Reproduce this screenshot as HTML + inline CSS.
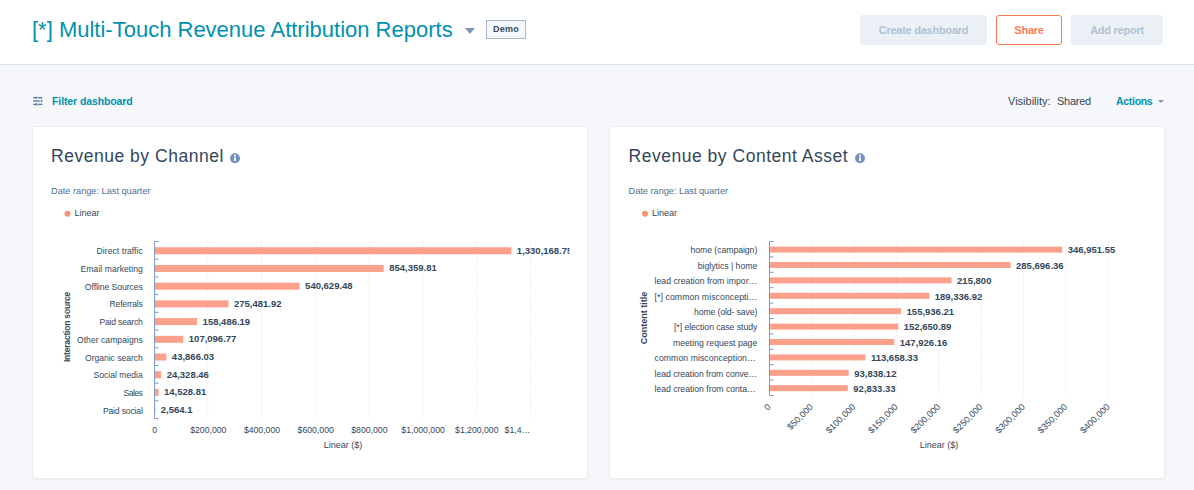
<!DOCTYPE html>
<html><head><meta charset="utf-8">
<style>
*{margin:0;padding:0;box-sizing:border-box}
html,body{width:1194px;height:490px;overflow:hidden;background:#f5f7fa;font-family:"Liberation Sans",sans-serif;color:#33475b}
.abs{position:absolute;white-space:nowrap}
#hdr{position:absolute;left:0;top:0;width:1194px;height:65px;background:#fff;border-bottom:1px solid #dfe3eb}
#title{left:32px;top:16px;font-size:22px;color:#0091ae;line-height:28px}
#caret{left:465px;top:28px;width:0;height:0;border-left:5.75px solid transparent;border-right:5.75px solid transparent;border-top:6.3px solid #7c98b6}
#demo{left:486px;top:20px;width:40px;height:19px;border:1px solid #a9b8cc;background:#f5f8fa;font-size:9px;letter-spacing:0.2px;font-weight:bold;line-height:17px;text-align:center;color:#33475b}
.btn{position:absolute;top:15px;height:30px;border-radius:3px;font-size:11px;letter-spacing:-0.25px;font-weight:bold;line-height:30px;text-align:center;white-space:nowrap}
#b1{left:860px;width:127px;background:#eaf0f6;color:#b0c1d4}
#b2{left:996px;width:66px;background:#fff;border:1px solid #ff7a59;color:#ff7a59;line-height:28px}
#b3{left:1071px;width:92px;background:#eaf0f6;color:#b0c1d4}
#filt{left:52px;top:94px;font-size:10.5px;letter-spacing:-0.1px;font-weight:bold;color:#0091ae;line-height:14px}
#vis1{left:1008px;top:94px;font-size:11px;color:#33475b;line-height:14px}
#vis2{left:1057px;top:94px;font-size:11px;letter-spacing:-0.25px;color:#33475b;line-height:14px}
#act{left:1116px;top:94px;font-size:10.5px;letter-spacing:-0.3px;font-weight:bold;color:#0091ae;line-height:14px}
#actc{left:1157.5px;top:100px;width:0;height:0;border-left:3px solid transparent;border-right:3px solid transparent;border-top:3.5px solid #7c98b6}
.card{position:absolute;top:126px;width:556px;height:353px;background:#fff;border:1px solid #e8ebf0;border-radius:3px;box-shadow:0 1px 2px rgba(45,62,80,0.04)}
#c1{left:32px}
#c2{left:609px}
svg text{font-family:"Liberation Sans",sans-serif}
</style></head><body>
<div id="hdr">
  <div id="title" class="abs">[*] Multi-Touch Revenue Attribution Reports</div>
  <div id="caret" class="abs"></div>
  <div id="demo" class="abs">Demo</div>
  <div id="b1" class="btn">Create dashboard</div>
  <div id="b2" class="btn">Share</div>
  <div id="b3" class="btn">Add report</div>
</div>
<svg class="abs" style="left:30px;top:93px" width="16" height="16" viewBox="0 0 16 16">
  <g fill="#647ea3">
    <rect x="3.1" y="4.0" width="4.1" height="1.4"/><rect x="5.8" y="3.5" width="1.4" height="2.4"/><rect x="8" y="4.0" width="4.3" height="1.4"/>
    <rect x="3.1" y="7.3" width="6.7" height="1.4"/><rect x="10.8" y="6.8" width="1.5" height="2.4"/>
    <rect x="3.1" y="10.7" width="4.1" height="1.4"/><rect x="5.8" y="10.2" width="1.4" height="2.4"/><rect x="8" y="10.7" width="4.3" height="1.4"/>
  </g>
</svg>
<div id="filt" class="abs">Filter dashboard</div>
<div id="vis1" class="abs">Visibility:</div>
<div id="vis2" class="abs">Shared</div>
<div id="act" class="abs">Actions</div>
<div id="actc" class="abs"></div>
<div id="c1" class="card"></div>
<div id="c2" class="card"></div>
<svg class="abs" style="left:0;top:0" width="1194" height="490" viewBox="0 0 1194 490">
<defs><clipPath id="clip1"><rect x="0" y="0" width="569.5" height="490"/></clipPath></defs>

<text x="51" y="161.8" font-size="17.5" letter-spacing="0.52" fill="#33475b">Revenue by Channel</text>
<circle cx="235" cy="158.3" r="5" fill="#7391bc"/>
<rect x="234.1" y="157.4" width="1.8" height="3.6" fill="#fff"/>
<circle cx="235" cy="155.7" r="1.05" fill="#fff"/>
<text x="51" y="194.4" font-size="9.2" fill="#516f90">Date range: Last quarter</text>
<circle cx="67.5" cy="213.7" r="3" fill="#fa9478"/>
<text x="74.4" y="215.9" font-size="9" fill="#33475b">Linear</text>


<text x="628.5" y="161.8" font-size="17.5" letter-spacing="0.52" fill="#33475b">Revenue by Content Asset</text>
<circle cx="860" cy="158.3" r="5" fill="#7391bc"/>
<rect x="859.1" y="157.4" width="1.8" height="3.6" fill="#fff"/>
<circle cx="860" cy="155.7" r="1.05" fill="#fff"/>
<text x="628.5" y="194.4" font-size="9.2" fill="#516f90">Date range: Last quarter</text>
<circle cx="645.0" cy="213.7" r="3" fill="#fa9478"/>
<text x="651.9" y="215.9" font-size="9" fill="#33475b">Linear</text>

<line x1="207.80" y1="241.5" x2="207.80" y2="418.60" stroke="#e8ecf1" stroke-width="1" stroke-dasharray="1.5,1.5"/>
<line x1="261.60" y1="241.5" x2="261.60" y2="418.60" stroke="#e8ecf1" stroke-width="1" stroke-dasharray="1.5,1.5"/>
<line x1="315.40" y1="241.5" x2="315.40" y2="418.60" stroke="#e8ecf1" stroke-width="1" stroke-dasharray="1.5,1.5"/>
<line x1="369.20" y1="241.5" x2="369.20" y2="418.60" stroke="#e8ecf1" stroke-width="1" stroke-dasharray="1.5,1.5"/>
<line x1="423.00" y1="241.5" x2="423.00" y2="418.60" stroke="#e8ecf1" stroke-width="1" stroke-dasharray="1.5,1.5"/>
<line x1="476.80" y1="241.5" x2="476.80" y2="418.60" stroke="#e8ecf1" stroke-width="1" stroke-dasharray="1.5,1.5"/>
<line x1="530.60" y1="241.5" x2="530.60" y2="418.60" stroke="#e8ecf1" stroke-width="1" stroke-dasharray="1.5,1.5"/>
<rect x="154.60" y="247.25" width="356.77" height="7" fill="#fba18b"/>
<text x="96.60" y="254.25" textLength="46.20" lengthAdjust="spacing" font-size="8.6" fill="#33475b">Direct traffic</text>
<text x="516.87" y="253.75" font-size="9.5" font-weight="bold" fill="#33475b" clip-path="url(#clip1)">1,330,168.75</text>
<rect x="154.60" y="264.96" width="229.15" height="7" fill="#fba18b"/>
<text x="80.60" y="271.96" textLength="62.20" lengthAdjust="spacing" font-size="8.6" fill="#33475b">Email marketing</text>
<text x="389.25" y="271.46" font-size="9.5" font-weight="bold" fill="#33475b" clip-path="url(#clip1)">854,359.81</text>
<rect x="154.60" y="282.67" width="145.00" height="7" fill="#fba18b"/>
<text x="84.80" y="289.67" textLength="58.00" lengthAdjust="spacing" font-size="8.6" fill="#33475b">Offline Sources</text>
<text x="305.10" y="289.17" font-size="9.5" font-weight="bold" fill="#33475b" clip-path="url(#clip1)">540,629.48</text>
<rect x="154.60" y="300.38" width="73.89" height="7" fill="#fba18b"/>
<text x="109.60" y="307.38" textLength="33.20" lengthAdjust="spacing" font-size="8.6" fill="#33475b">Referrals</text>
<text x="233.99" y="306.88" font-size="9.5" font-weight="bold" fill="#33475b" clip-path="url(#clip1)">275,481.92</text>
<rect x="154.60" y="318.09" width="42.51" height="7" fill="#fba18b"/>
<text x="99.50" y="325.09" textLength="43.30" lengthAdjust="spacing" font-size="8.6" fill="#33475b">Paid search</text>
<text x="202.61" y="324.59" font-size="9.5" font-weight="bold" fill="#33475b" clip-path="url(#clip1)">158,486.19</text>
<rect x="154.60" y="335.80" width="28.72" height="7" fill="#fba18b"/>
<text x="77.00" y="342.80" textLength="65.80" lengthAdjust="spacing" font-size="8.6" fill="#33475b">Other campaigns</text>
<text x="188.82" y="342.30" font-size="9.5" font-weight="bold" fill="#33475b" clip-path="url(#clip1)">107,096.77</text>
<rect x="154.60" y="353.51" width="11.77" height="7" fill="#fba18b"/>
<text x="85.00" y="360.51" textLength="57.80" lengthAdjust="spacing" font-size="8.6" fill="#33475b">Organic search</text>
<text x="171.87" y="360.01" font-size="9.5" font-weight="bold" fill="#33475b" clip-path="url(#clip1)">43,866.03</text>
<rect x="154.60" y="371.23" width="6.53" height="7" fill="#fba18b"/>
<text x="93.40" y="378.23" textLength="49.40" lengthAdjust="spacing" font-size="8.6" fill="#33475b">Social media</text>
<text x="166.63" y="377.73" font-size="9.5" font-weight="bold" fill="#33475b" clip-path="url(#clip1)">24,328.46</text>
<rect x="154.60" y="388.93" width="3.90" height="7" fill="#fba18b"/>
<text x="123.50" y="395.93" textLength="19.30" lengthAdjust="spacing" font-size="8.6" fill="#33475b">Sales</text>
<text x="164.00" y="395.43" font-size="9.5" font-weight="bold" fill="#33475b" clip-path="url(#clip1)">14,528.81</text>
<rect x="154.60" y="406.64" width="0.69" height="7" fill="#fba18b"/>
<text x="102.90" y="413.64" textLength="39.90" lengthAdjust="spacing" font-size="8.6" fill="#33475b">Paid social</text>
<text x="160.79" y="413.14" font-size="9.5" font-weight="bold" fill="#33475b" clip-path="url(#clip1)">2,564.1</text>
<line x1="154.6" y1="241.5" x2="154.6" y2="418.60" stroke="#7b9ac4" stroke-width="1"/>
<line x1="154.6" y1="241.50" x2="158.6" y2="241.50" stroke="#7b9ac4" stroke-width="1"/>
<line x1="154.6" y1="259.21" x2="158.6" y2="259.21" stroke="#7b9ac4" stroke-width="1"/>
<line x1="154.6" y1="276.92" x2="158.6" y2="276.92" stroke="#7b9ac4" stroke-width="1"/>
<line x1="154.6" y1="294.63" x2="158.6" y2="294.63" stroke="#7b9ac4" stroke-width="1"/>
<line x1="154.6" y1="312.34" x2="158.6" y2="312.34" stroke="#7b9ac4" stroke-width="1"/>
<line x1="154.6" y1="330.05" x2="158.6" y2="330.05" stroke="#7b9ac4" stroke-width="1"/>
<line x1="154.6" y1="347.76" x2="158.6" y2="347.76" stroke="#7b9ac4" stroke-width="1"/>
<line x1="154.6" y1="365.47" x2="158.6" y2="365.47" stroke="#7b9ac4" stroke-width="1"/>
<line x1="154.6" y1="383.18" x2="158.6" y2="383.18" stroke="#7b9ac4" stroke-width="1"/>
<line x1="154.6" y1="400.89" x2="158.6" y2="400.89" stroke="#7b9ac4" stroke-width="1"/>
<line x1="154.6" y1="418.60" x2="158.6" y2="418.60" stroke="#7b9ac4" stroke-width="1"/>
<text x="154.60" y="432.8" text-anchor="middle" font-size="8.7" fill="#33475b">0</text>
<text x="208.30" y="432.8" text-anchor="middle" font-size="8.7" fill="#33475b">$200,000</text>
<text x="262.00" y="432.8" text-anchor="middle" font-size="8.7" fill="#33475b">$400,000</text>
<text x="315.70" y="432.8" text-anchor="middle" font-size="8.7" fill="#33475b">$600,000</text>
<text x="369.40" y="432.8" text-anchor="middle" font-size="8.7" fill="#33475b">$800,000</text>
<text x="423.10" y="432.8" text-anchor="middle" font-size="8.7" fill="#33475b">$1,000,000</text>
<text x="476.80" y="432.8" text-anchor="middle" font-size="8.7" fill="#33475b">$1,200,000</text>
<text x="504.6" y="432.8" font-size="8.7" fill="#33475b">$1,4…</text>
<text x="343" y="447.5" text-anchor="middle" font-size="9" fill="#33475b">Linear ($)</text>
<text transform="translate(69.5,327) rotate(-90)" text-anchor="middle" font-size="8.5" letter-spacing="-0.2" font-weight="bold" fill="#33475b">Interaction source</text>
<line x1="811.67" y1="241.5" x2="811.67" y2="395.50" stroke="#e8ecf1" stroke-width="1" stroke-dasharray="1.5,1.5"/>
<line x1="854.04" y1="241.5" x2="854.04" y2="395.50" stroke="#e8ecf1" stroke-width="1" stroke-dasharray="1.5,1.5"/>
<line x1="896.41" y1="241.5" x2="896.41" y2="395.50" stroke="#e8ecf1" stroke-width="1" stroke-dasharray="1.5,1.5"/>
<line x1="938.78" y1="241.5" x2="938.78" y2="395.50" stroke="#e8ecf1" stroke-width="1" stroke-dasharray="1.5,1.5"/>
<line x1="981.15" y1="241.5" x2="981.15" y2="395.50" stroke="#e8ecf1" stroke-width="1" stroke-dasharray="1.5,1.5"/>
<line x1="1023.52" y1="241.5" x2="1023.52" y2="395.50" stroke="#e8ecf1" stroke-width="1" stroke-dasharray="1.5,1.5"/>
<line x1="1065.89" y1="241.5" x2="1065.89" y2="395.50" stroke="#e8ecf1" stroke-width="1" stroke-dasharray="1.5,1.5"/>
<line x1="1108.26" y1="241.5" x2="1108.26" y2="395.50" stroke="#e8ecf1" stroke-width="1" stroke-dasharray="1.5,1.5"/>
<rect x="769.50" y="246.60" width="292.74" height="6" fill="#fba18b"/>
<text x="690.40" y="253.40" textLength="66.90" lengthAdjust="spacing" font-size="8.7" fill="#33475b">home (campaign)</text>
<text x="1067.74" y="253.30" font-size="9.5" font-weight="bold" fill="#33475b">346,951.55</text>
<rect x="769.50" y="262.00" width="241.06" height="6" fill="#fba18b"/>
<text x="697.80" y="268.80" textLength="59.50" lengthAdjust="spacing" font-size="8.7" fill="#33475b">biglytics | home</text>
<text x="1016.06" y="268.70" font-size="9.5" font-weight="bold" fill="#33475b">285,696.36</text>
<rect x="769.50" y="277.40" width="182.08" height="6" fill="#fba18b"/>
<text x="654.50" y="284.20" textLength="102.80" lengthAdjust="spacing" font-size="8.7" fill="#33475b">lead creation from impor…</text>
<text x="957.08" y="284.10" font-size="9.5" font-weight="bold" fill="#33475b">215,800</text>
<rect x="769.50" y="292.80" width="159.75" height="6" fill="#fba18b"/>
<text x="654.50" y="299.60" textLength="102.80" lengthAdjust="spacing" font-size="8.7" fill="#33475b">[*] common misconcepti…</text>
<text x="934.75" y="299.50" font-size="9.5" font-weight="bold" fill="#33475b">189,336.92</text>
<rect x="769.50" y="308.20" width="131.57" height="6" fill="#fba18b"/>
<text x="694.00" y="315.00" textLength="63.30" lengthAdjust="spacing" font-size="8.7" fill="#33475b">home (old- save)</text>
<text x="906.57" y="314.90" font-size="9.5" font-weight="bold" fill="#33475b">155,936.21</text>
<rect x="769.50" y="323.60" width="128.80" height="6" fill="#fba18b"/>
<text x="674.00" y="330.40" textLength="83.30" lengthAdjust="spacing" font-size="8.7" fill="#33475b">[*] election case study</text>
<text x="903.80" y="330.30" font-size="9.5" font-weight="bold" fill="#33475b">152,650.89</text>
<rect x="769.50" y="339.00" width="124.81" height="6" fill="#fba18b"/>
<text x="672.90" y="345.80" textLength="84.40" lengthAdjust="spacing" font-size="8.7" fill="#33475b">meeting request page</text>
<text x="899.81" y="345.70" font-size="9.5" font-weight="bold" fill="#33475b">147,926.16</text>
<rect x="769.50" y="354.40" width="95.90" height="6" fill="#fba18b"/>
<text x="654.50" y="361.20" textLength="101.20" lengthAdjust="spacing" font-size="8.7" fill="#33475b">common misconception…</text>
<text x="870.90" y="361.10" font-size="9.5" font-weight="bold" fill="#33475b">113,658.33</text>
<rect x="769.50" y="369.80" width="79.18" height="6" fill="#fba18b"/>
<text x="654.50" y="376.60" textLength="102.80" lengthAdjust="spacing" font-size="8.7" fill="#33475b">lead creation from conve…</text>
<text x="854.18" y="376.50" font-size="9.5" font-weight="bold" fill="#33475b">93,838.12</text>
<rect x="769.50" y="385.20" width="78.33" height="6" fill="#fba18b"/>
<text x="654.50" y="392.00" textLength="101.20" lengthAdjust="spacing" font-size="8.7" fill="#33475b">lead creation from conta…</text>
<text x="853.33" y="391.90" font-size="9.5" font-weight="bold" fill="#33475b">92,833.33</text>
<line x1="769.5" y1="241.5" x2="769.5" y2="395.50" stroke="#7b9ac4" stroke-width="1"/>
<line x1="769.5" y1="241.50" x2="773.5" y2="241.50" stroke="#7b9ac4" stroke-width="1"/>
<line x1="769.5" y1="256.90" x2="773.5" y2="256.90" stroke="#7b9ac4" stroke-width="1"/>
<line x1="769.5" y1="272.30" x2="773.5" y2="272.30" stroke="#7b9ac4" stroke-width="1"/>
<line x1="769.5" y1="287.70" x2="773.5" y2="287.70" stroke="#7b9ac4" stroke-width="1"/>
<line x1="769.5" y1="303.10" x2="773.5" y2="303.10" stroke="#7b9ac4" stroke-width="1"/>
<line x1="769.5" y1="318.50" x2="773.5" y2="318.50" stroke="#7b9ac4" stroke-width="1"/>
<line x1="769.5" y1="333.90" x2="773.5" y2="333.90" stroke="#7b9ac4" stroke-width="1"/>
<line x1="769.5" y1="349.30" x2="773.5" y2="349.30" stroke="#7b9ac4" stroke-width="1"/>
<line x1="769.5" y1="364.70" x2="773.5" y2="364.70" stroke="#7b9ac4" stroke-width="1"/>
<line x1="769.5" y1="380.10" x2="773.5" y2="380.10" stroke="#7b9ac4" stroke-width="1"/>
<line x1="769.5" y1="395.50" x2="773.5" y2="395.50" stroke="#7b9ac4" stroke-width="1"/>
<text transform="translate(771.30,407.5) rotate(-45)" text-anchor="end" font-size="9" fill="#33475b">0</text>
<text transform="translate(813.67,407.5) rotate(-45)" text-anchor="end" font-size="9" fill="#33475b">$50,000</text>
<text transform="translate(856.04,407.5) rotate(-45)" text-anchor="end" font-size="9" fill="#33475b">$100,000</text>
<text transform="translate(898.41,407.5) rotate(-45)" text-anchor="end" font-size="9" fill="#33475b">$150,000</text>
<text transform="translate(940.78,407.5) rotate(-45)" text-anchor="end" font-size="9" fill="#33475b">$200,000</text>
<text transform="translate(983.15,407.5) rotate(-45)" text-anchor="end" font-size="9" fill="#33475b">$250,000</text>
<text transform="translate(1025.52,407.5) rotate(-45)" text-anchor="end" font-size="9" fill="#33475b">$300,000</text>
<text transform="translate(1067.89,407.5) rotate(-45)" text-anchor="end" font-size="9" fill="#33475b">$350,000</text>
<text transform="translate(1110.26,407.5) rotate(-45)" text-anchor="end" font-size="9" fill="#33475b">$400,000</text>
<text x="939" y="447.5" text-anchor="middle" font-size="9" fill="#33475b">Linear ($)</text>
<text transform="translate(647,318) rotate(-90)" text-anchor="middle" font-size="9" font-weight="bold" fill="#33475b">Content title</text>
</svg>
</body></html>
